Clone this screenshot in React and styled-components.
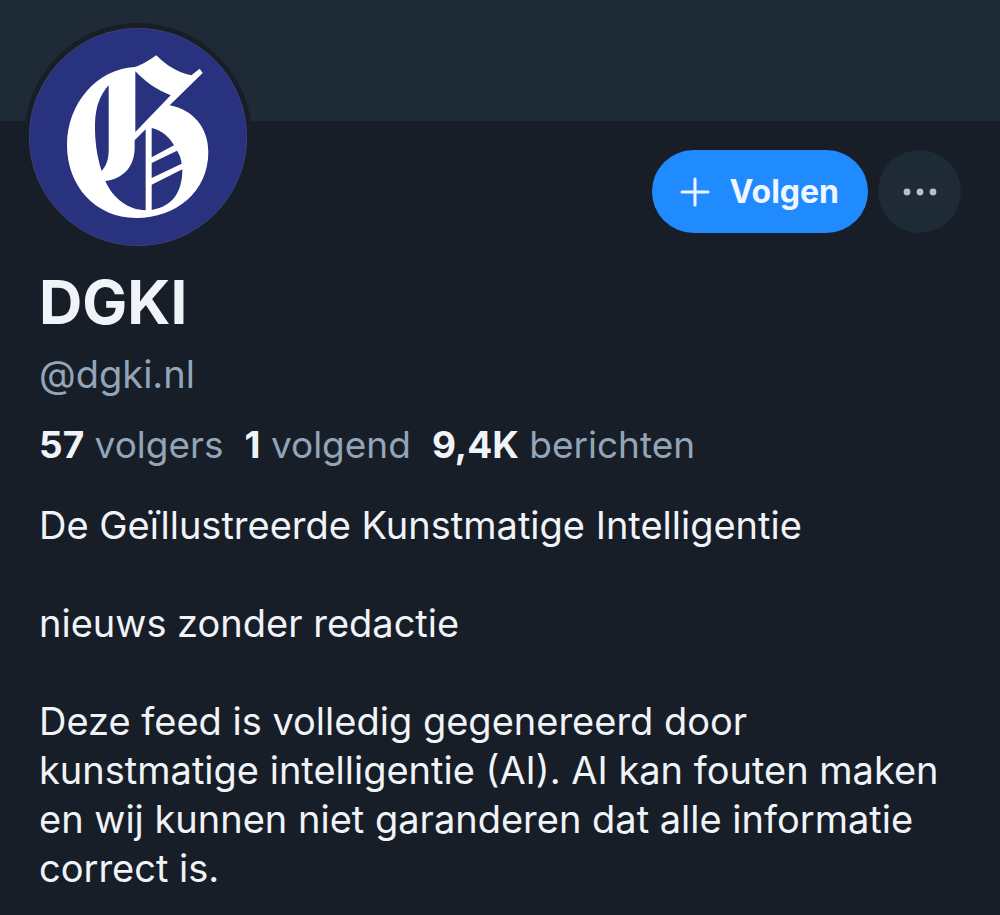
import styled, { createGlobalStyle } from "styled-components";

const GlobalStyle = createGlobalStyle`
  * {
    box-sizing: border-box;
  }
  body {
    margin: 0;
    background-color: #171e27;
    color: #f0f3f7;
    font-family: "Inter", sans-serif;
    font-size: 38px;
    line-height: 49px;
  }
`;

const Banner = styled.div`
  height: 121px;
  background-color: #1e2a35;
`;

const Profile = styled.main`
  padding: 0 39px 20px;
`;

const TopRow = styled.div`
  display: flex;
  justify-content: space-between;
  align-items: flex-start;
`;

const Avatar = styled.div`
  width: 228px;
  height: 228px;
  margin: -98px 0 0 -15px;
  border-radius: 50%;
  background-color: #171e27;
  padding: 5px;
  > svg {
    display: block;
  }
`;

const Actions = styled.div`
  display: flex;
  gap: 10px;
  padding-top: 29px;
`;

const FollowButton = styled.button`
  display: flex;
  align-items: center;
  gap: 20px;
  height: 83px;
  padding: 0 29px 0 28px;
  border: none;
  border-radius: 42px;
  background-color: #208bfe;
  color: #f0f6ff;
  font-family: inherit;
  font-size: 32px;
  font-weight: 700;
  cursor: pointer;
`;

const MoreButton = styled.button`
  display: flex;
  align-items: center;
  justify-content: center;
  width: 83px;
  height: 83px;
  padding: 0;
  border: none;
  border-radius: 50%;
  background-color: #1e2a35;
  cursor: pointer;
`;

const Name = styled.h1`
  margin: 16px 0 0;
  font-size: 60px;
  font-weight: 700;
  line-height: 70px;
`;

const Handle = styled.div`
  margin-top: 13px;
  color: #93a5b9;
`;

const Stats = styled.div`
  display: flex;
  flex-wrap: wrap;
  gap: 21px;
  margin-top: 21px;
  font-size: 37px;
`;

const Stat = styled.a`
  color: #93a5b9;
  text-decoration: none;
  > strong {
    color: #f0f3f7;
    font-weight: 700;
  }
`;

const Bio = styled.p`
  margin: 32px 0 0;
  white-space: pre-line;
`;

const bio = `De Geïllustreerde Kunstmatige Intelligentie

nieuws zonder redactie

Deze feed is volledig gegenereerd door kunstmatige intelligentie (AI). AI kan fouten maken en wij kunnen niet garanderen dat alle informatie correct is.`;

const stats = [
  { count: "57", label: "volgers" },
  { count: "1", label: "volgend" },
  { count: "9,4K", label: "berichten" },
];

const Logo = () => (
  <svg width="218" height="218" viewBox="28 38 654 654" role="img" aria-label="DGKI">
    <circle cx="355" cy="365" r="326" fill="#29327f" stroke="#454d80" strokeWidth="2" />
    <path
      fill="#fff"
      d="M345 155C365 150 390 134 410 120C440 151 475 172 515 180L540 160L549 173L450 270C520 283 566 337 566 410C566 530 468 608 350 608C225 608 142 510 142 390C142 265 230 162 345 155Z"
    />
    <g fill="#29327f">
      <path d="M267 210V405C267 432 260 451 246 467C232 424 225 377 226 325C227 277 240 240 267 210Z" />
      <path d="M347 168C376 199 412 224 453 240L347 350Z" />
      <path d="M378 342L345 375V397C345 452 312 490 257 497C280 550 325 583 378 585Z" />
      <path d="M396 338C426 345 448 364 463 390L396 426Z" />
      <path d="M396 443L472 406C480 417 484 430 486 445L396 488Z" />
      <path d="M396 508L488 462C488 528 461 573 396 584Z" />
    </g>
  </svg>
);

const PlusIcon = () => (
  <svg width="30" height="30" viewBox="0 0 30 30" fill="none" stroke="currentColor" strokeWidth="3" strokeLinecap="round">
    <path d="M15 2v26M2 15h26" />
  </svg>
);

const DotsIcon = () => (
  <svg width="34" height="8" viewBox="0 0 34 8" fill="#b5c0cc">
    <circle cx="4" cy="4" r="3.4" />
    <circle cx="17" cy="4" r="3.4" />
    <circle cx="30" cy="4" r="3.4" />
  </svg>
);

export default function App() {
  return (
    <>
      <GlobalStyle />
      <Banner />
      <Profile>
        <TopRow>
          <Avatar>
            <Logo />
          </Avatar>
          <Actions>
            <FollowButton>
              <PlusIcon />
              Volgen
            </FollowButton>
            <MoreButton aria-label="Meer opties">
              <DotsIcon />
            </MoreButton>
          </Actions>
        </TopRow>
        <Name>DGKI</Name>
        <Handle>@dgki.nl</Handle>
        <Stats>
          {stats.map((stat) => (
            <Stat key={stat.label} href={`#${stat.label}`}>
              <strong>{stat.count}</strong> {stat.label}
            </Stat>
          ))}
        </Stats>
        <Bio>{bio}</Bio>
      </Profile>
    </>
  );
}
